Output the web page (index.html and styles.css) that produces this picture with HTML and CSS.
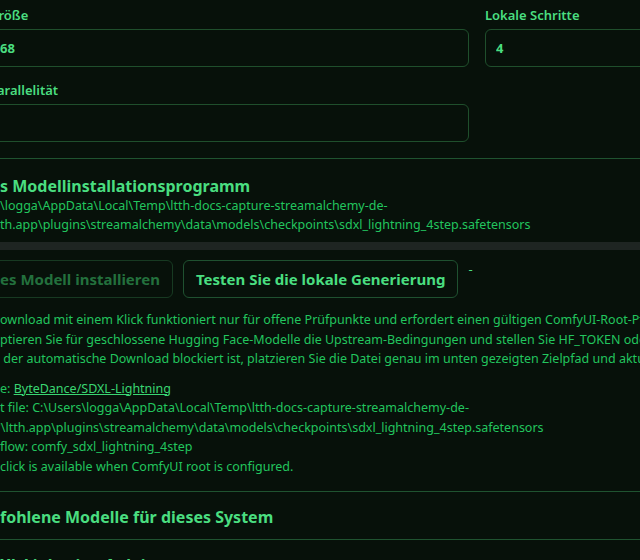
FILE: index.html
```html
<!DOCTYPE html>
<html lang="de">
<head>
  <meta charset="UTF-8">
  <title>StreamAlchemy – Lokale Generierung</title>
  <meta name="viewport" content="width=device-width, initial-scale=1.0">
  <link rel="stylesheet" href="styles.css">
</head>
<body>
  <div class="page">

    <!-- Einstellungen -->
    <section class="fields">
      <div class="field">
        <label for="size">Größe</label>
        <input type="text" id="size" value="68">
      </div>
      <div class="field">
        <label for="steps">Lokale Schritte</label>
        <input type="text" id="steps" value="4">
      </div>
      <div class="field">
        <label for="parallel">Parallelität</label>
        <input type="text" id="parallel" value="">
      </div>
    </section>

    <!-- Installer -->
    <section class="installer">
      <h3 class="title">s Modellinstallationsprogramm</h3>
      <div class="path">
        <div>\logga\AppData\Local\Temp\ltth-docs-capture-streamalchemy-de-</div>
        <div>th.app\plugins\streamalchemy\data\models\checkpoints\sdxl_lightning_4step.safetensors</div>
      </div>
      <div class="scrollbar"></div>

      <div class="actions">
        <button class="btn" disabled>es Modell installieren</button>
        <button class="btn">Testen Sie die lokale Generierung</button>
        <span class="status">-</span>
      </div>

      <div class="notes">
        <div>ownload mit einem Klick funktioniert nur für offene Prüfpunkte und erfordert einen gültigen ComfyUI-Root-Pfad.</div>
        <div>ptieren Sie für geschlossene Hugging Face-Modelle die Upstream-Bedingungen und stellen Sie HF_TOKEN oder HUGGINGFACE_TOKEN ein.</div>
        <div>&nbsp;der automatische Download blockiert ist, platzieren Sie die Datei genau im unten gezeigten Zielpfad und aktualisieren Sie.</div>
      </div>

      <div class="meta">
        <div>e: <a href="#">ByteDance/SDXL-Lightning</a></div>
        <div>t file: C:\Users\logga\AppData\Local\Temp\ltth-docs-capture-streamalchemy-de-</div>
        <div class="cut">'\ltth.app\plugins\streamalchemy\data\models\checkpoints\sdxl_lightning_4step.safetensors</div>
        <div>flow: comfy_sdxl_lightning_4step</div>
        <div>click is available when ComfyUI root is configured.</div>
      </div>
    </section>

    <!-- Aufklappbare Bereiche -->
    <div class="panel">fohlene Modelle für dieses System</div>
    <div class="panel">XL Lightning Anleitung</div>

  </div>
</body>
</html>
```

FILE: styles.css
```css
* { box-sizing: border-box; margin: 0; padding: 0; }

body {
  font-family: 'Segoe UI', 'Noto Sans', sans-serif;
  background: #07110a;
  color: #22c55e;
  height: 100vh;
  overflow: hidden;
}

.page {
  width: 960px;
}

/* Einstellungen */
.fields {
  display: grid;
  grid-template-columns: 480px 480px;
  column-gap: 16px;
  row-gap: 14px;
  margin-left: -11px;
  padding: 6px 0 16px;
  border-bottom: 1px solid #1f5330;
}

.field label {
  display: block;
  font-size: 13px;
  font-weight: 600;
  line-height: 18px;
  color: #4ade80;
  margin-bottom: 5px;
}

.field input {
  width: 100%;
  height: 38px;
  padding: 0 10px;
  background: transparent;
  border: 1px solid #1f4f2c;
  border-radius: 6px;
  color: #4ade80;
  font: 700 13px 'Segoe UI', 'Noto Sans', sans-serif;
  outline: none;
}

/* Installer */
.installer {
  padding: 17px 0 15px;
  border-bottom: 1px solid #1f5330;
}

.title {
  font-size: 16px;
  font-weight: 700;
  line-height: 20px;
  color: #4ade80;
}

.path {
  font-size: 12.5px;
  line-height: 19px;
  white-space: nowrap;
}

.scrollbar {
  height: 8px;
  margin-top: 8px;
  background: #1e2522;
}

.actions {
  display: flex;
  align-items: flex-start;
  gap: 10px;
  margin: 10px 0 0 -13px;
}

.btn {
  height: 38px;
  padding: 0 12px;
  background: transparent;
  border: 1px solid #1f5130;
  border-radius: 6px;
  color: #4ade80;
  font: 700 15px 'Segoe UI', 'Noto Sans', sans-serif;
  cursor: pointer;
}

.btn:disabled {
  color: #23703d;
  border-color: #173a22;
  cursor: default;
}

.status {
  font-size: 13px;
  line-height: 19px;
  color: #4ade80;
}

.notes {
  margin-top: 12px;
  font-size: 12.5px;
  line-height: 19.5px;
  white-space: nowrap;
}

.meta {
  margin-top: 10px;
  font-size: 12.5px;
  line-height: 19.5px;
  white-space: nowrap;
}

.meta a {
  color: #3ad672;
}

.meta .cut {
  text-indent: -2px;
}

/* Aufklappbare Bereiche */
.panel {
  padding: 15px 0 12px;
  font-size: 16px;
  font-weight: 700;
  line-height: 20px;
  color: #4ade80;
  border-bottom: 1px solid #1f5330;
  cursor: pointer;
}
```
